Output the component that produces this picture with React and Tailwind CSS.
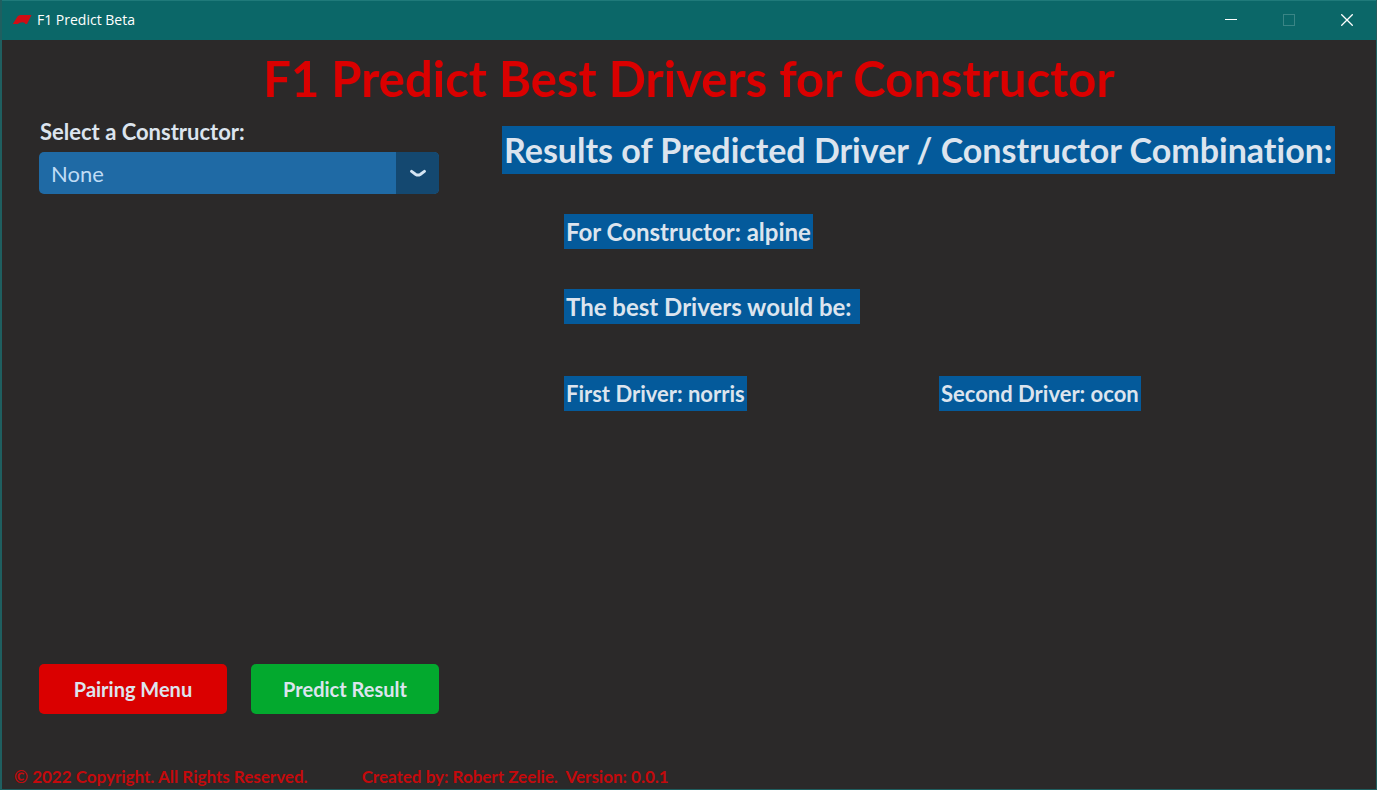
import { useState } from "react";

const constructors = ["None", "alpine", "ferrari", "mclaren", "mercedes", "red_bull", "williams"];

function Logo() {
  return (
    <svg className="h-3 w-5 shrink-0" viewBox="0 0 20 12" aria-hidden="true">
      <path d="M5.5 2.5Q6.5 1 8.5 1H19.5L15 10H13.5Q12.8 8.3 10.5 8.3Q7.2 8.3 5.8 10H0.8Z" fill="#d00d14" />
    </svg>
  );
}

function TitleBar() {
  return (
    <header className="flex h-10 items-center border-t border-[#1f7a7a] bg-[#0b6768] pb-0.5 pl-2.5 text-white">
      <Logo />
      <span className="ml-[5px] flex-1 font-['Open_Sans','Noto_Sans',sans-serif] text-sm">F1 Predict Beta</span>
      <button type="button" aria-label="Minimize" className="flex h-full w-[58px] items-center justify-center">
        <svg className="size-3" viewBox="0 0 12 12" aria-hidden="true">
          <path d="M0 5.5H12" stroke="#fff" />
        </svg>
      </button>
      <button type="button" aria-label="Maximize" disabled className="flex h-full w-[58px] items-center justify-center">
        <svg className="size-3" viewBox="0 0 12 12" aria-hidden="true">
          <rect x="0.5" y="0.5" width="11" height="11" fill="none" stroke="#3a8585" />
        </svg>
      </button>
      <button type="button" aria-label="Close" className="flex h-full w-[58px] items-center justify-center">
        <svg className="size-3" viewBox="0 0 12 12" aria-hidden="true">
          <path d="M0.3 0.3L11.7 11.7M11.7 0.3L0.3 11.7" stroke="#fff" strokeWidth="1.3" />
        </svg>
      </button>
    </header>
  );
}

function ConstructorSelect() {
  const [value, setValue] = useState("None");
  return (
    <div className="flex flex-col">
      <label htmlFor="constructor" className="pl-px text-[22px] leading-8 font-bold">
        Select a Constructor:
      </label>
      <div className="relative mt-1">
        <select
          id="constructor"
          value={value}
          onChange={(e) => setValue(e.target.value)}
          className="h-[42px] w-full appearance-none rounded-[5px] bg-[#1f6aa5] pr-12 pl-3 text-[22px] text-[#bfdcf5]"
        >
          {constructors.map((c) => (
            <option key={c}>{c}</option>
          ))}
        </select>
        <span className="pointer-events-none absolute inset-y-0 right-0 flex w-[43px] items-center justify-center rounded-r-[5px] bg-[#144870]">
          <svg className="h-2.5 w-4" viewBox="0 0 16 10" aria-hidden="true">
            <path d="M1.6 3.4L5.8 6.4Q8 7.8 10.2 6.4L14.4 3.4" fill="none" stroke="#d5e5f3" strokeWidth="3" strokeLinecap="round" />
          </svg>
        </span>
      </div>
    </div>
  );
}

function Results() {
  return (
    <section className="flex flex-1 flex-col items-start pt-2.5 text-[#dce4ee]">
      <h2 className="bg-[#045a9b] px-0.5 text-[34px] leading-[48px] font-bold whitespace-nowrap">
        Results of Predicted Driver / Constructor Combination:
      </h2>
      <div className="flex flex-col items-start self-stretch pt-10 pl-[62px] whitespace-nowrap">
        <p className="bg-[#045a9b] px-0.5 text-2xl leading-[35px] font-bold">For Constructor: alpine</p>
        <p className="mt-10 bg-[#045a9b] pr-2 pl-0.5 text-2xl leading-[35px] font-bold">The best Drivers would be:</p>
        <div className="mt-[52px] grid grid-cols-[375px_1fr] text-[22px] leading-[35px] font-bold">
          <p className="justify-self-start bg-[#045a9b] px-0.5">First Driver: norris</p>
          <p className="justify-self-start bg-[#045a9b] px-0.5">Second Driver: ocon</p>
        </div>
      </div>
    </section>
  );
}

export default function App() {
  return (
    <div className="flex min-h-screen flex-col border-r border-b border-l-2 border-[#1f5f60] bg-[#2b2929] font-[Lato,'Noto_Sans',sans-serif] text-[#dce4ee] [font-variant-ligatures:none]">
      <TitleBar />
      <main className="flex flex-1 flex-col">
        <h1 className="pt-1.5 pb-0.5 text-center text-[49px] leading-[64px] font-bold text-[#da0000]">
          F1 Predict Best Drivers for Constructor
        </h1>
        <div className="flex flex-1 gap-[63px] pt-1 pr-10 pl-[37px]">
          <div className="flex w-[400px] shrink-0 flex-col justify-between pb-[51px]">
            <ConstructorSelect />
            <div className="grid grid-cols-2 gap-6 text-xl font-bold">
              <button type="button" className="h-[50px] rounded-[5px] bg-[#da0000]">Pairing Menu</button>
              <button type="button" className="h-[50px] rounded-[5px] bg-[#03a92e]">Predict Result</button>
            </div>
          </div>
          <Results />
        </div>
      </main>
      <footer className="flex gap-[54px] pl-3 text-[17px] leading-6 font-bold whitespace-pre text-[#c4090c]">
        <p>© 2022 Copyright. All Rights Reserved.</p>
        <p>{"Created by: Robert Zeelie.  Version: 0.0.1"}</p>
      </footer>
    </div>
  );
}
